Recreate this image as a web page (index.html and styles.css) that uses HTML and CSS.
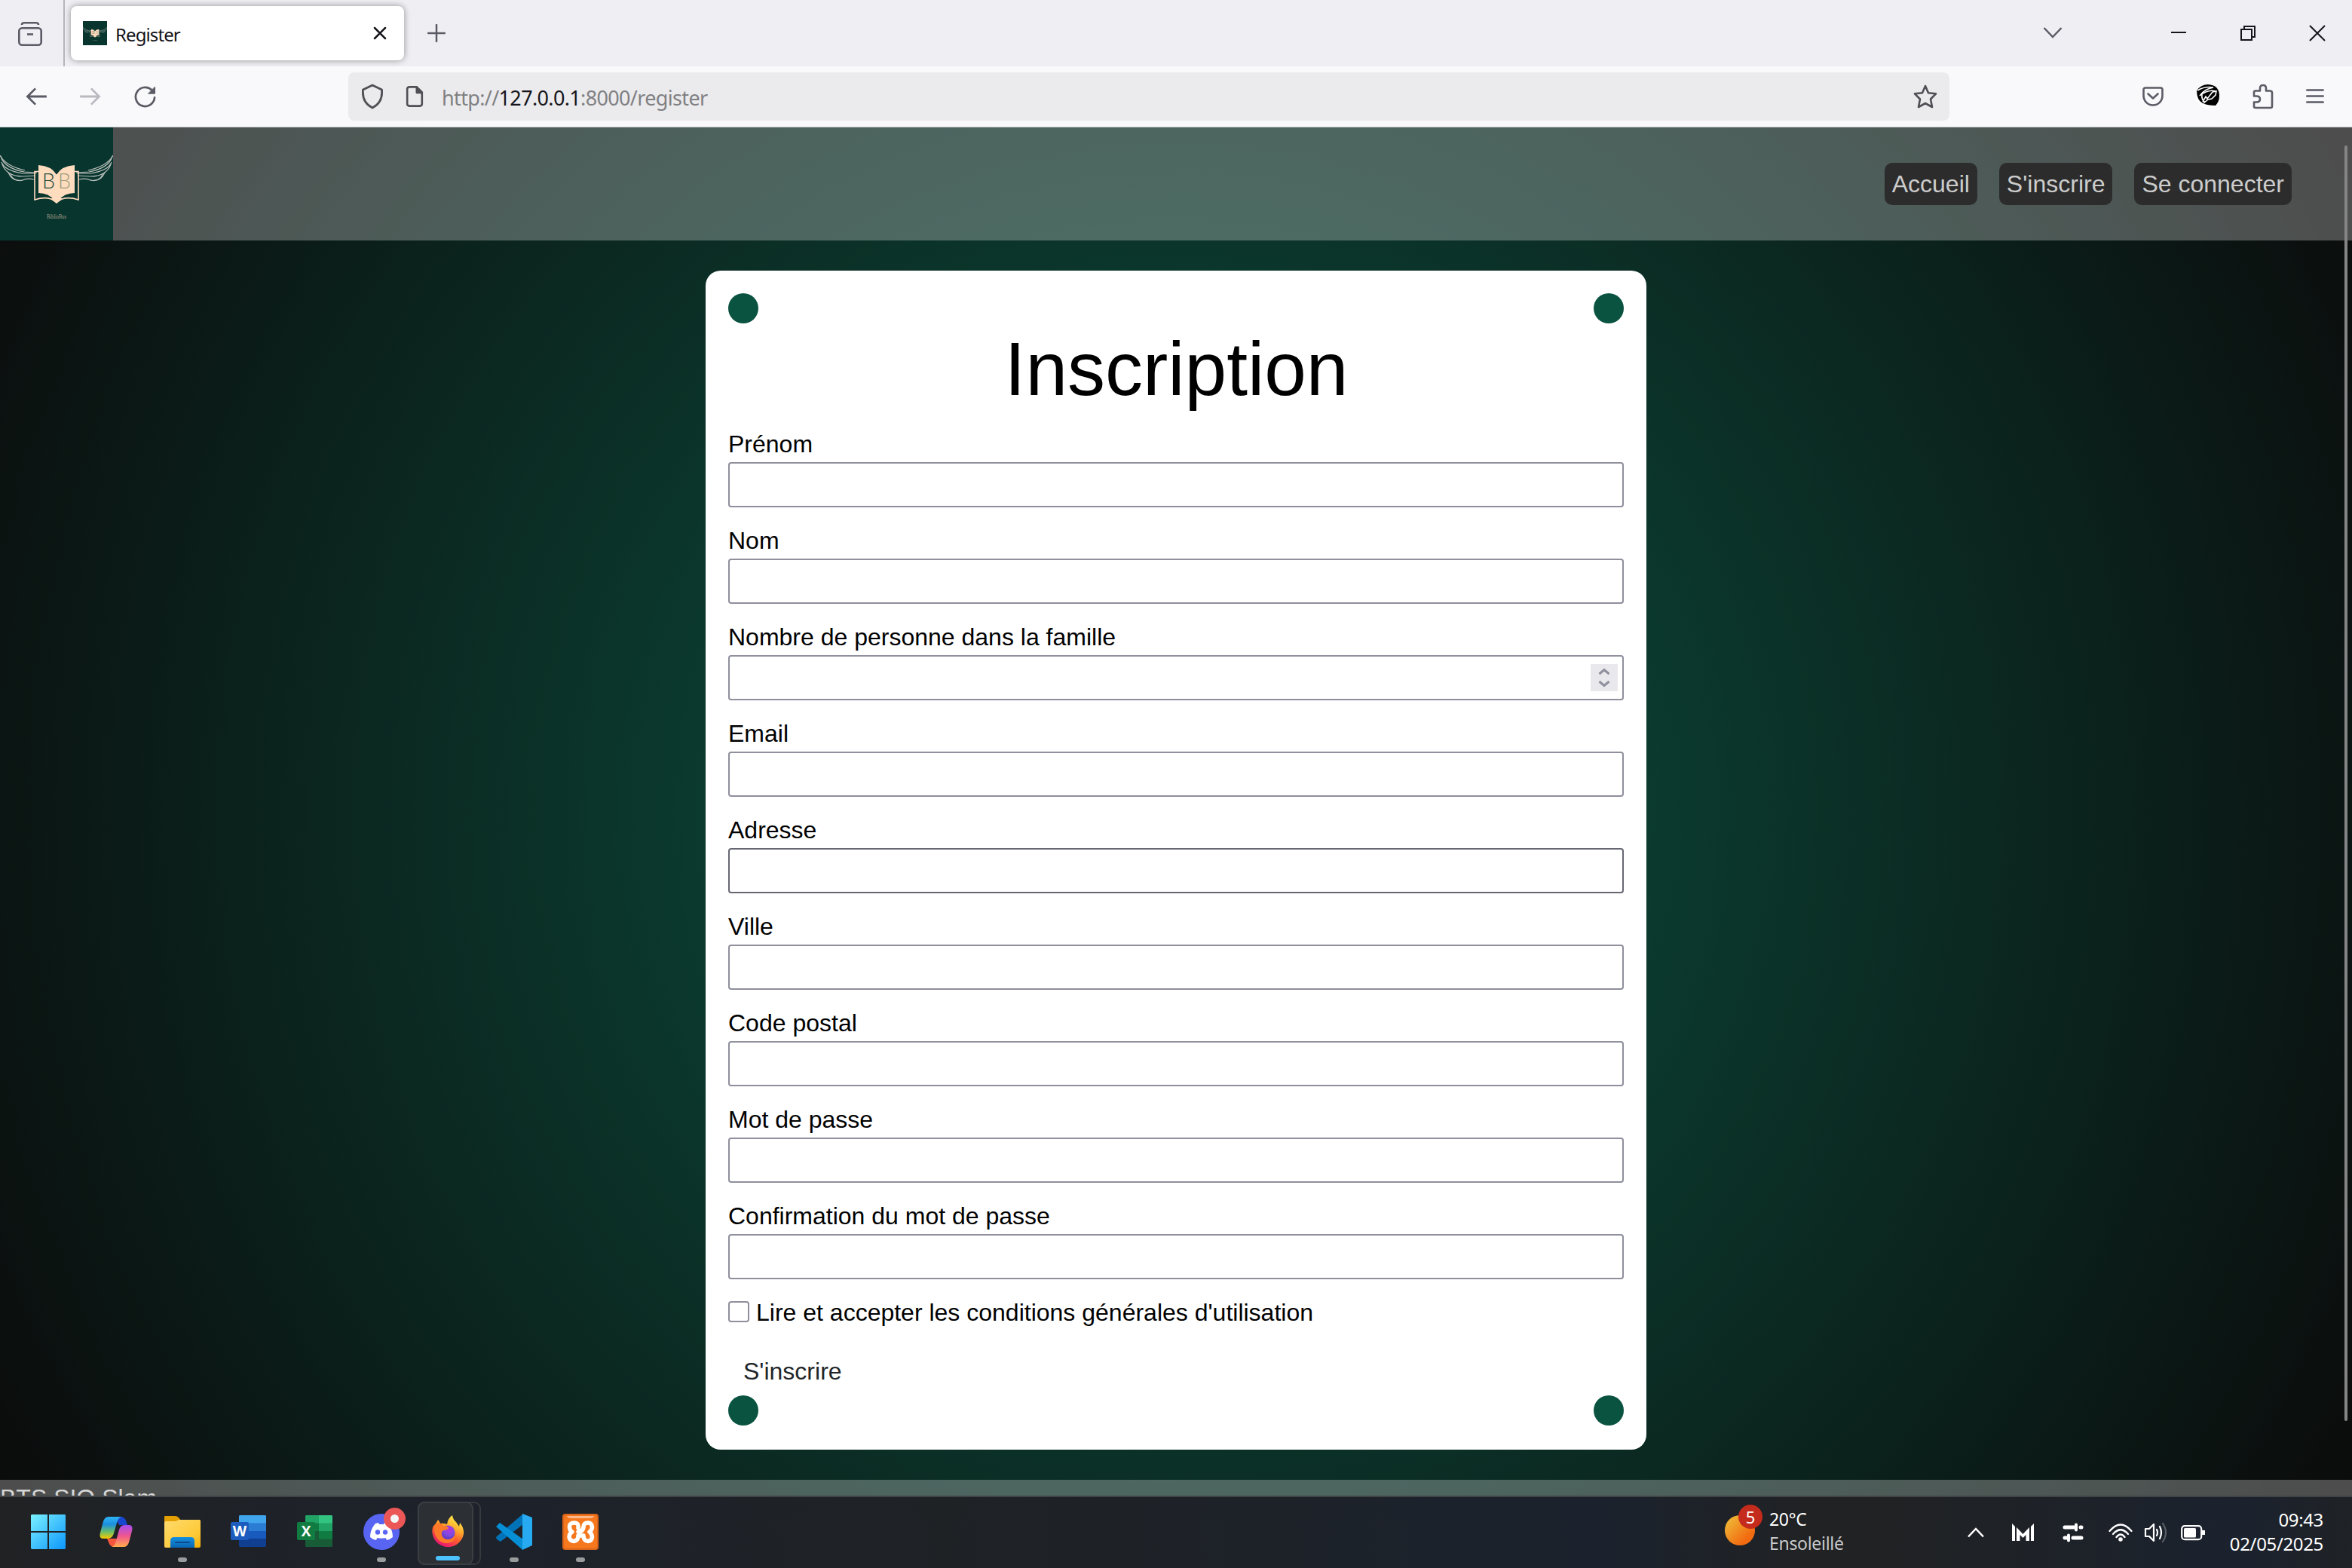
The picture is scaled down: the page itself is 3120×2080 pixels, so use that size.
FILE: index.html
```html
<!DOCTYPE html>
<html lang="fr">
<head>
<meta charset="utf-8">
<title>Register</title>
<link rel="stylesheet" href="styles.css">
</head>
<body>
<svg class="defs" width="0" height="0" aria-hidden="true">
  <defs>
    <symbol id="wings" viewBox="0 0 150 150">
      <rect width="150" height="150" fill="#08362f"/>
      <g id="wing" fill="none" stroke="#b9bdb8" stroke-width="1.200">
        <path d="M0 37C6 49 20 54 33 57"/>
        <path d="M1 38C4 51 20 57 32 59L49 60"/>
        <path d="M2 46C5 55 18 59 30 61H48"/>
        <path d="M3 49C8 62 20 65 30 65L47 64"/>
        <path d="M11 60C15 69 21 72 30 70Q36 67 45 69"/>
        <path d="M14 62C16 70 24 71 30 70"/>
      </g>
      <use href="#wing" transform="matrix(-1 0 0 1 150 0)"/>
      <path d="M51 58.500H46V96Q64 90 75 99Q86 90 104 96V58.500H99" fill="none" stroke="#ffdcbe" stroke-width="1.600"/>
      <path d="M51 50Q68 51 75 62.500Q82 51 99 50V87Q85 87 78 97H72Q65 87 51 87Z" fill="#ffdcbe"/>
      <path d="M66 94L75 101L84 94Z" fill="#ffdcbe"/>
      <text x="56" y="81" font-family="Lato" font-weight="300" font-size="27.500" fill="#1f4a3d" textLength="17" lengthAdjust="spacingAndGlyphs">B</text>
      <text x="77" y="81" font-family="Lato" font-weight="300" font-size="27.500" fill="#9a9c7d" textLength="17" lengthAdjust="spacingAndGlyphs">B</text>
      <text x="75" y="121" font-family="Liberation Serif" font-size="7.500" fill="#a69f88" text-anchor="middle" textLength="26" lengthAdjust="spacingAndGlyphs">BiblioBus</text>
    </symbol>
  </defs>
</svg>

<div class="tabbar">
  <div class="recent">
    <svg width="32" height="32" viewBox="0 0 32 32" fill="none" stroke="#5b5b66" stroke-width="2.600"><path d="M5 4Q5 1.300 8 1.300H24Q27 1.300 27 4" /><rect x="1.300" y="8.300" width="29.400" height="22.400" rx="4"/><path d="M12 16.500H20"/></svg>
  </div>
  <div class="tab">
    <svg class="favicon" width="32" height="32" viewBox="0 0 150 150"><use href="#wings"/></svg>
    <span class="tab-title">Register</span>
    <svg width="18" height="18" viewBox="0 0 18 18" stroke="#15141a" stroke-width="2.500" stroke-linecap="round"><path d="M2 2L16 16M16 2L2 16"/></svg>
  </div>
  <svg class="newtab" width="24" height="24" viewBox="0 0 24 24" stroke="#5b5b66" stroke-width="2.500" stroke-linecap="round"><path d="M12 1V23M1 12H23"/></svg>
  <div class="window-controls">
    <svg width="26" height="18" viewBox="0 0 26 18" fill="none" stroke="#5b5b66" stroke-width="2.500"><path d="M1.500 2L13 14L24.500 2"/></svg>
    <svg class="minimise" width="20" height="20" viewBox="0 0 20 20" stroke="#15141a" stroke-width="2"><path d="M0 9H20"/></svg>
    <svg class="restore" width="20" height="20" viewBox="0 0 20 20" fill="none" stroke="#15141a" stroke-width="2"><rect x="1" y="5" width="14" height="14"/><path d="M5 5V1H19V15H15"/></svg>
    <svg class="close" width="22" height="22" viewBox="0 0 22 22" stroke="#15141a" stroke-width="2"><path d="M1 1L21 21M21 1L1 21"/></svg>
  </div>
</div>

<div class="toolbar">
  <div class="history">
    <svg width="28" height="24" viewBox="0 0 30 26" fill="none" stroke="#5b5b66" stroke-width="3"><path d="M30 13H3M14 1.500L2.500 13L14 24.500"/></svg>
    <svg width="28" height="24" viewBox="0 0 30 26" fill="none" stroke="#b9b9c0" stroke-width="3"><path d="M0 13H27M16 1.500L27.500 13L16 24.500"/></svg>
    <svg width="29" height="29" viewBox="0 0 30 30" fill="none" stroke="#5b5b66" stroke-width="2.800" stroke-linecap="round"><path d="M28 16A13 13 0 1 1 24 5.500"/><path d="M28.500 1.500V10.500H19.500Z" fill="#5b5b66" stroke-width="1"/></svg>
  </div>
  <div class="urlbar">
    <svg width="30" height="34" viewBox="0 0 30 34" fill="none" stroke="#4f4f55" stroke-width="2.800" stroke-linejoin="round"><path d="M15 2L27.500 8Q29 25 15 32Q1 25 2.500 8Z"/></svg>
    <svg class="page-icon" width="24" height="28" viewBox="0 0 24 30" fill="none" stroke="#4f4f55" stroke-width="2.800" stroke-linejoin="round"><path d="M5 1.500H15L22.500 9V25.500Q22.500 28.500 19.500 28.500H4.500Q1.500 28.500 1.500 25.500V4.500Q1.500 1.500 5 1.500Z"/><path d="M15 2V9.500H22Z" fill="#4f4f55"/></svg>
    <span class="url">http://<b>127.0.0.1</b>:8000/register</span>
    <svg width="32" height="32" viewBox="0 0 32 32" fill="none" stroke="#4f4f55" stroke-width="2.600" stroke-linejoin="round"><path d="M16 2L20 11.300L30 12.300L23 19.500L25 30L16 25L7 30L9 19.500L2 12.300L12 11.300Z"/></svg>
  </div>
  <div class="extensions">
    <svg width="28" height="26" viewBox="0 0 28 26" fill="none" stroke="#5b5b66" stroke-width="2.600" stroke-linecap="round" stroke-linejoin="round"><path d="M4 1.500H24Q26.500 1.500 26.500 4V12A12.500 12.500 0 0 1 1.500 12V4Q1.500 1.500 4 1.500Z"/><path d="M7.500 9.500L14 15.500L20.500 9.500"/></svg>
    <svg width="32" height="32" viewBox="0 0 32 32"><circle cx="16" cy="16" r="16" fill="#fff"/><path d="M1 8Q7 0 16 0Q31 1 31 15Q31 23 26 28Q15 28 9 25Q1 21 1 8Z" fill="#000"/><path d="M2 8Q12 2 23 4Q11 6 5 15Q16 6 26 9M8 13Q7 20 12 24M9 23L13 16L15 19L22 10L27 9L26 14L21 19L16 20L10 25" fill="none" stroke="#fff" stroke-width="1.600"/></svg>
    <svg width="28" height="34" viewBox="0 0 28 34" fill="none" stroke="#5b5b66" stroke-width="2.600" stroke-linejoin="round"><path d="M2 11.500Q2 9.500 4 9.500H10V6Q10 2 14 2Q18 2 18 6V9.500H23Q26 9.500 26 12V30Q26 32 24 32H4Q2 32 2 30V24.500H5Q10 24.500 10 20.500Q10 16.500 5 16.500H2Z"/></svg>
    <svg width="24" height="22" viewBox="0 0 24 22" stroke="#5b5b66" stroke-width="2.600" stroke-linecap="round"><path d="M1.300 2.500H22.700M1.300 10.500H22.700M1.300 18.500H22.700"/></svg>
  </div>
</div>

<div class="viewport">
  <header class="site-header">
    <svg width="150" height="150" viewBox="0 0 150 150"><use href="#wings"/></svg>
    <nav class="nav"><a>Accueil</a><a>S'inscrire</a><a>Se connecter</a></nav>
  </header>
  <form class="card">
    <div class="dots"><i></i><i></i></div>
    <h1>Inscription</h1>
    <div class="field"><label>Prénom</label><div class="input"></div></div>
    <div class="field"><label>Nom</label><div class="input"></div></div>
    <div class="field"><label>Nombre de personne dans la famille</label><div class="input"><span class="spinner"><svg width="16" height="26" viewBox="0 0 16 26" fill="none" stroke="#8f8f9d" stroke-width="3"><path d="M1.500 8L8 2.500L14.500 8M1.500 18L8 23.500L14.500 18"/></svg></span></div></div>
    <div class="field"><label>Email</label><div class="input"></div></div>
    <div class="field"><label>Adresse</label><div class="input hovered"></div></div>
    <div class="field"><label>Ville</label><div class="input"></div></div>
    <div class="field"><label>Code postal</label><div class="input"></div></div>
    <div class="field"><label>Mot de passe</label><div class="input"></div></div>
    <div class="field"><label>Confirmation du mot de passe</label><div class="input"></div></div>
    <div class="terms"><span class="checkbox"></span><label>Lire et accepter les conditions générales d'utilisation</label></div>
    <div class="submit">S'inscrire</div>
    <div class="dots"><i></i><i></i></div>
  </form>
  <footer class="site-footer">BTS SIO Slam</footer>
  <div class="scrollbar"></div>
</div>

<div class="taskbar">
  <div class="apps">
    <div class="app start"><svg width="48" height="48" viewBox="0 0 48 48"><defs><linearGradient id="win" x1="0" y1="0" x2="48" y2="48" gradientUnits="userSpaceOnUse"><stop offset="0" stop-color="#7df3ff"/><stop offset="1" stop-color="#0a94fb"/></linearGradient></defs><path d="M2 1H23V23H1V2ZM25 1H46L47 2V23H25ZM1 25H23V47H2L1 46ZM25 25H47V46L46 47H25Z" fill="url(#win)"/></svg></div>
    <div class="app"><svg width="48" height="48" viewBox="0 0 48 48"><defs>
      <linearGradient id="cp1" x1="0" y1="0" x2="0" y2="1"><stop offset="0" stop-color="#2fb4f3"/><stop offset=".35" stop-color="#1a8fe0"/><stop offset=".7" stop-color="#6fbf62"/><stop offset="1" stop-color="#fbc800"/></linearGradient>
      <linearGradient id="cp2" x1="0" y1="0" x2="0" y2="1"><stop offset="0" stop-color="#a44df0"/><stop offset=".5" stop-color="#f0568e"/><stop offset="1" stop-color="#ffac4c"/></linearGradient></defs>
      <path d="M22 4H30Q35 4 37 9L39 15H28Z" fill="#1747cf"/><path d="M12 33H27L21 44Q17 44 15 40Z" fill="#f4563c"/>
      <path d="M14 4H31Q27 5 25 12L21 26Q19 33 13 33H7Q1 33 3 25L7 10Q9 4 14 4Z" fill="url(#cp1)"/>
      <path d="M35 15H41Q47 15 45 23L41 38Q39 44 34 44H18Q22 43 24 36L28 21Q30 15 35 15Z" fill="url(#cp2)"/></svg></div>
    <div class="app"><svg width="48" height="48" viewBox="0 0 48 48"><defs><linearGradient id="fold" x1="0" y1="0" x2="1" y2="1"><stop offset="0" stop-color="#ffdb6e"/><stop offset=".7" stop-color="#fdc936"/><stop offset="1" stop-color="#f3ad05"/></linearGradient><linearGradient id="tray" x1="0" y1="0" x2="0" y2="1"><stop offset="0" stop-color="#1590dd"/><stop offset="1" stop-color="#0b66b5"/></linearGradient></defs><path d="M1 3H14Q17 3 19 5L22 9V18H0V4Q0 3 1 3Z" fill="#e39f04"/><path d="M0 12Q0 10 2 10H14Q17 10 19 8H47L48 9V43Q48 45 46 45H2Q0 45 0 43Z" fill="url(#fold)"/><path d="M8 45V36Q8 31 13 31H35Q40 31 40 36V45Z" fill="url(#tray)"/><rect x="14" y="37" width="20" height="2" rx="1" fill="#0e4a8a"/></svg><b class="running"></b></div>
    <div class="app"><svg width="48" height="48" viewBox="0 0 48 48"><path d="M12 2H46L47 3V13H11V3Z" fill="#41a5ee"/><path d="M11 12.500H47V23.500H11Z" fill="#2b7cd3"/><path d="M11 23H47V33.500H11Z" fill="#185abd"/><path d="M11 33H47V43L46 44H12L11 43Z" fill="#103f91"/><rect y="11" width="24" height="24" rx="2" fill="#1b5cbe"/><text x="12" y="30" text-anchor="middle" font-family="Open Sans" font-weight="700" font-size="19" fill="#fff">W</text></svg></div>
    <div class="app"><svg width="48" height="48" viewBox="0 0 48 48"><path d="M12 2H29V13H11V3Z" fill="#21a366"/><path d="M29 2H46L47 3V13H29Z" fill="#33c481"/><path d="M11 12.500H29V23.500H11Z" fill="#107c41"/><path d="M29 12.500H47V23.500H29Z" fill="#21a366"/><path d="M11 23H29V34H11Z" fill="#185c37"/><path d="M29 23H47V34H29Z" fill="#107c41"/><path d="M11 33.500H47V43L46 44H12L11 43Z" fill="#185c37"/><rect y="11" width="24" height="24" rx="2" fill="#107c41"/><text x="12" y="30" text-anchor="middle" font-family="Open Sans" font-weight="700" font-size="19" fill="#fff">X</text></svg></div>
    <div class="app"><svg width="48" height="48" viewBox="0 0 48 48"><circle cx="24" cy="24" r="24" fill="#5865f2"/><path d="M16 13L20 12L21 14H27L28 12L32 13Q39 21 39 31Q36 34 31 35L29.500 32Q24 33.500 18.500 32L17 35Q12 34 9 31Q9 21 16 13Z" fill="#fff"/><circle cx="19" cy="24.500" r="3.200" fill="#5865f2"/><circle cx="29" cy="24.500" r="3.200" fill="#5865f2"/></svg><b class="running"></b><span class="badge"></span></div>
    <div class="app active"><svg width="48" height="48" viewBox="0 0 48 48"><defs><linearGradient id="fx" x1=".8" y1="0" x2=".3" y2="1"><stop offset="0" stop-color="#fff44f"/><stop offset=".35" stop-color="#ffb22e"/><stop offset=".65" stop-color="#ff5a2c"/><stop offset="1" stop-color="#e3107c"/></linearGradient><radialGradient id="globe" cx=".6" cy=".3" r=".8"><stop offset="0" stop-color="#b833e1"/><stop offset=".5" stop-color="#7d4be0"/><stop offset="1" stop-color="#5430b5"/></radialGradient></defs><path d="M8 13L11 8Q13 10 14 13Q18 12 23 14Q24 6 30 2Q31 8 35 11L39 17L40 12Q46 19 45 27A21 21 0 1 1 4 18Q5 16 8 13Z" fill="url(#fx)"/><circle cx="24" cy="25" r="9.500" fill="url(#globe)"/><path d="M6 16Q14 9 18 16Q24 16 25 19Q23 22 18 22Q15 24 16 28Q18 35 26 34Q34 32 34 25Q36 33 30 37Q20 42 12 35Q5 28 6 16Z" fill="#ff7a28"/></svg><b class="running"></b></div>
    <div class="app"><svg width="48" height="48" viewBox="0 0 48 48"><path d="M0 31L36 0V14L6 37L1 34Z" fill="#0073b8"/><path d="M0 17L5 12L36 34V48Q35 48 33 46L1 18Z" fill="#078fd6"/><path d="M35 0L48 5V42L35 48Z" fill="#27aaf2"/></svg><b class="running"></b></div>
    <div class="app"><svg width="48" height="48" viewBox="0 0 48 48"><rect width="48" height="48" rx="4" fill="#d9641a"/><rect x="2" y="2" width="44" height="44" rx="3" fill="#f5781f"/><path d="M6 3H42Q41 6 36 6H12Q7 6 6 3Z" fill="#fbb98b"/><path d="M21 19Q22 12 16 12Q9 12 9.500 18Q10 23 13 24Q9 26 9 31Q10 36 15 36.500Q21 36 21 29H28Q28 36 34 36.500Q39 36 39.500 31Q39 26 36 24Q39 22 39.500 18Q39 12 34 12Q28 12 28 18Q27 24 21 24" fill="none" stroke="#fff" stroke-width="5.500" stroke-linejoin="round" stroke-linecap="round"/></svg><b class="running"></b></div>
  </div>
  <div class="weather">
    <div class="sun"><span>5</span></div>
    <div class="weather-text"><div>20°C</div><div class="dim">Ensoleillé</div></div>
  </div>
  <div class="tray">
    <svg width="22" height="14" viewBox="0 0 22 14" fill="none" stroke="#fff" stroke-width="2.500"><path d="M1 12.500L11 2L21 12.500"/></svg>
    <svg class="t-m" width="30" height="24" viewBox="0 0 30 24" fill="#fff"><path d="M0 0L4 4V23H0ZM29 0V23H25V4ZM6 5L14.500 14L23 5V23H18.500V15L14.500 19L10.500 15V23H6Z"/></svg>
    <svg class="t-s" width="28" height="26" viewBox="0 0 28 26" stroke="#fff" stroke-linecap="round"><path d="M3 6H15M24 6H25M3 20H5M14 20H25" stroke-width="5"/><path d="M18 2.500V9.500M8 16.500V23.500" stroke-width="4"/></svg>
    <svg class="t-w" width="32" height="26" viewBox="0 0 32 26" fill="none" stroke="#fff" stroke-width="2.300" stroke-linecap="round"><path d="M1.500 11Q16-6 30.500 11M6 15Q16 3.500 26 15M10.500 19Q16 12 21.500 19"/><circle cx="16" cy="22" r="2.800" fill="#fff" stroke="none"/></svg>
    <svg class="t-v" width="32" height="30" viewBox="0 0 32 30" fill="none" stroke="#fff" stroke-width="2.200" stroke-linecap="round" stroke-linejoin="round"><path d="M2 10H7L13 4V26L7 20H2ZM17 11Q19 15 17 19M21 7Q25 15 21 23"/><path d="M25 3Q33 15 25 27" stroke="#5a5f66"/></svg>
    <svg class="t-b" width="32" height="22" viewBox="0 0 32 22"><rect x="1.200" y="2.200" width="26" height="18" rx="4" fill="none" stroke="#fff" stroke-width="2.200"/><rect x="4" y="5" width="16" height="12.500" rx="1.500" fill="#fff"/><rect x="28" y="8" width="4" height="6" fill="#fff"/></svg>
    <div class="clock"><div>09:43</div><div>02/05/2025</div></div>
  </div>
</div>
</body>
</html>
```
FILE: styles.css
```css
* { box-sizing: border-box; }
body { margin: 0; width: 3120px; height: 2080px; overflow: hidden; display: flex; flex-direction: column; font-family: "Liberation Sans", Arial, sans-serif; }
.defs { position: absolute; }
svg { flex: none; display: block; }

/* Browser chrome */
.tabbar { height: 88px; flex: none; background: #efeef3; display: flex; align-items: center; font-family: "Noto Sans", sans-serif; }
.recent { width: 86px; height: 88px; border-right: 2px solid #b6b6bd; padding: 29px 0 0 24px; }
.tab { width: 442px; height: 72px; margin-left: 8px; border-radius: 8px; background: #fff; box-shadow: 0 0 8px rgba(0,0,0,.4); display: flex; align-items: center; padding: 0 23px 0 16px; }
.tab-title { flex: 1; margin-left: 11px; padding-top: 2px; font-size: 24px; letter-spacing: -.9px; color: #15141a; }
.newtab { margin-left: 31px; }
.window-controls { margin-left: auto; display: flex; align-items: center; padding-right: 35px; }
.minimise { margin-left: 144px; }
.restore { margin-left: 72px; }
.close { margin-left: 71px; }
.toolbar { height: 81px; flex: none; background: #f9f9fb; border-bottom: 1px solid #cfcfd3; display: flex; align-items: center; font-family: "Noto Sans", sans-serif; }
.history { width: 462px; display: flex; gap: 44px; align-items: center; padding-left: 34px; }
.urlbar { width: 2124px; height: 64px; border-radius: 8px; background: #ebebed; display: flex; align-items: center; padding: 0 16px 0 17px; }
.page-icon { margin-left: 29px; }
.url { flex: 1; margin-left: 24px; padding-top: 2px; font-size: 27px; letter-spacing: -.65px; color: #808083; white-space: nowrap; }
.url b { font-weight: 400; color: #15141a; }
.extensions { margin-left: auto; display: flex; align-items: center; gap: 43px; padding-right: 37px; }

/* Web page */
.viewport { height: 1815px; flex: none; overflow: hidden; position: relative; background: radial-gradient(circle farthest-corner at 50% 50%, #0b5341 0%, #0b0b0b 100%); }
.site-header { height: 150px; background: rgba(255,255,255,.27); display: flex; align-items: center; justify-content: space-between; padding-right: 80px; }
.nav { display: flex; gap: 29px; }
.nav a { height: 56px; line-height: 56px; padding: 0 10px; border-radius: 10px; background: #2c2c2c; color: #ccc; font-size: 32px; }
.card { width: 1248px; height: 1564px; margin: 40px auto; padding: 30px; border-radius: 20px; background: #fff; color: #000; }
.dots { height: 40px; display: flex; justify-content: space-between; }
.dots i { width: 40px; height: 40px; border-radius: 50%; background: #0b5341; }
h1 { margin: 0; height: 136px; line-height: 120px; padding-left: 1px; font-size: 100px; font-weight: 400; text-align: center; }
.field { height: 128px; font-size: 32px; }
.field label { display: block; height: 48px; line-height: 48px; }
.input { height: 60px; border: 2px solid #8f8f9d; border-radius: 4px; display: flex; align-items: center; justify-content: flex-end; padding-right: 6px; }
.input.hovered { border-color: #676774; }
.spinner { width: 36px; height: 36px; background: #e9e9ed; display: flex; align-items: center; justify-content: center; }
.terms { height: 48px; display: flex; align-items: center; font-size: 32px; line-height: 48px; }
.checkbox { width: 28px; height: 28px; margin: -2px 9px 0 0; border: 2px solid #8f8f9d; border-radius: 4px; }
.submit { height: 86px; padding: 30px 20px 0; line-height: 48px; font-size: 32px; color: #212529; }
.site-footer { height: 100px; background: rgba(255,255,255,.27); color: #d6d6d6; font-size: 32px; line-height: 48px; }
.scrollbar { position: absolute; right: 6px; top: 24px; width: 4px; height: 1692px; border-radius: 2px; background: #858585; }

/* Taskbar */
.taskbar { height: 96px; flex: none; background: linear-gradient(90deg, #202224, #1d222b 20%, #1f2225 40%, #1b222d 68%, #212223 78%, #1f2226 84%, #1b222e 95%, #1f2226); border-top: 2px solid #414447; display: flex; color: #fff; font-family: "Noto Sans", sans-serif; font-size: 24px; position: relative; }
.apps { display: flex; padding: 6px 0 0 24px; }
.app { width: 80px; height: 80px; margin-right: 8px; display: flex; align-items: center; justify-content: center; position: relative; }
.app.start { margin-right: 10px; }
.running { position: absolute; left: 34px; bottom: 0; width: 12px; height: 6px; border-radius: 3px; background: #9a9b9c; }
.active::before { content: ""; position: absolute; left: 0; top: 0; width: 80px; height: 80px; border: 2px solid #36393d; border-radius: 9px; }
.active::after { content: ""; position: absolute; left: 0; top: 0; width: 70px; height: 80px; border: 2px solid #3b3e42; border-radius: 9px; background: #2c2f33; }
.active svg { position: relative; z-index: 1; }
.active .running { left: 24px; bottom: 2px; width: 32px; background: #4cc2ff; z-index: 1; }
.badge { position: absolute; left: 43px; top: 8px; width: 29px; height: 29px; border-radius: 50%; border: 9px solid #eb5757; background: #f5f5f5; }
.weather { margin-left: auto; display: flex; width: 260px; padding-top: 13px; }
.sun { width: 40px; height: 40px; margin-top: 11px; border-radius: 50%; background: linear-gradient(135deg, #eec43c, #f26b10 75%); position: relative; }
.sun span { position: absolute; left: 18px; top: -14px; width: 32px; height: 32px; border-radius: 50%; background: #c42b1c; text-align: center; font-size: 22px; line-height: 32px; }
.weather-text { margin-left: 19px; line-height: 32px; font-size: 23px; letter-spacing: -.3px; }
.dim { color: #c8cacb; }
.tray { display: flex; align-items: center; padding-right: 38px; margin-left: 62px; }
.t-m { margin-left: 37px; }
.t-s { margin-left: 37px; }
.t-w { margin-left: 33px; }
.t-v { margin-left: 15px; }
.t-b { margin-left: 17px; }
.clock { width: 157px; margin-top: -2px; text-align: right; line-height: 32px; letter-spacing: -.35px; white-space: nowrap; }
```
